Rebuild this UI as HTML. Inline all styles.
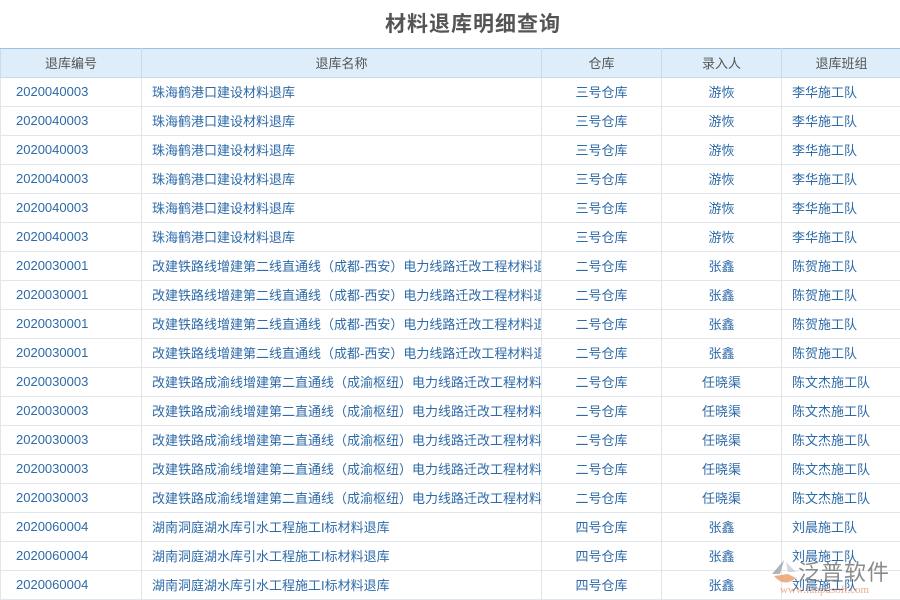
<!DOCTYPE html>
<html><head><meta charset="utf-8"><style>
body{margin:0;width:900px;height:600px;overflow:hidden;background:#fff;font-family:"Liberation Sans","Noto Sans CJK SC",sans-serif;position:relative}
h1{margin:0;position:absolute;top:8px;left:385px;font-size:21px;color:#555;font-weight:bold;letter-spacing:1px;white-space:nowrap}
table{position:absolute;top:48px;left:0;border-collapse:collapse;table-layout:fixed;width:901px}
td,th{height:28px;padding:0 0 2px 0;border:1px solid #e2e6ea;font-size:13px;white-space:nowrap;overflow:hidden;font-weight:normal;box-sizing:border-box}
tr{height:29px}
th{background:#ddeefa;color:#555;border-color:#c8dbea;border-top:1px solid #9fc3de}
td{color:#2d6aa8}
.c{text-align:center}.l{padding-left:10px;text-align:left}
td:first-child{padding-left:15px}
.wm{position:absolute;left:770px;top:552px;width:130px;height:48px}
</style></head><body>
<h1>材料退库明细查询</h1>
<table>
<colgroup><col style="width:141px"><col style="width:400px"><col style="width:120px"><col style="width:120px"><col style="width:120px"></colgroup>
<tr><th>退库编号</th><th>退库名称</th><th>仓库</th><th>录入人</th><th>退库班组</th></tr>
<tr><td>2020040003</td><td class="l">珠海鹤港口建设材料退库</td><td class="c">三号仓库</td><td class="c">游恢</td><td class="l">李华施工队</td></tr>
<tr><td>2020040003</td><td class="l">珠海鹤港口建设材料退库</td><td class="c">三号仓库</td><td class="c">游恢</td><td class="l">李华施工队</td></tr>
<tr><td>2020040003</td><td class="l">珠海鹤港口建设材料退库</td><td class="c">三号仓库</td><td class="c">游恢</td><td class="l">李华施工队</td></tr>
<tr><td>2020040003</td><td class="l">珠海鹤港口建设材料退库</td><td class="c">三号仓库</td><td class="c">游恢</td><td class="l">李华施工队</td></tr>
<tr><td>2020040003</td><td class="l">珠海鹤港口建设材料退库</td><td class="c">三号仓库</td><td class="c">游恢</td><td class="l">李华施工队</td></tr>
<tr><td>2020040003</td><td class="l">珠海鹤港口建设材料退库</td><td class="c">三号仓库</td><td class="c">游恢</td><td class="l">李华施工队</td></tr>
<tr><td>2020030001</td><td class="l">改建铁路线增建第二线直通线（成都-西安）电力线路迁改工程材料退库</td><td class="c">二号仓库</td><td class="c">张鑫</td><td class="l">陈贺施工队</td></tr>
<tr><td>2020030001</td><td class="l">改建铁路线增建第二线直通线（成都-西安）电力线路迁改工程材料退库</td><td class="c">二号仓库</td><td class="c">张鑫</td><td class="l">陈贺施工队</td></tr>
<tr><td>2020030001</td><td class="l">改建铁路线增建第二线直通线（成都-西安）电力线路迁改工程材料退库</td><td class="c">二号仓库</td><td class="c">张鑫</td><td class="l">陈贺施工队</td></tr>
<tr><td>2020030001</td><td class="l">改建铁路线增建第二线直通线（成都-西安）电力线路迁改工程材料退库</td><td class="c">二号仓库</td><td class="c">张鑫</td><td class="l">陈贺施工队</td></tr>
<tr><td>2020030003</td><td class="l">改建铁路成渝线增建第二直通线（成渝枢纽）电力线路迁改工程材料退库</td><td class="c">二号仓库</td><td class="c">任晓渠</td><td class="l">陈文杰施工队</td></tr>
<tr><td>2020030003</td><td class="l">改建铁路成渝线增建第二直通线（成渝枢纽）电力线路迁改工程材料退库</td><td class="c">二号仓库</td><td class="c">任晓渠</td><td class="l">陈文杰施工队</td></tr>
<tr><td>2020030003</td><td class="l">改建铁路成渝线增建第二直通线（成渝枢纽）电力线路迁改工程材料退库</td><td class="c">二号仓库</td><td class="c">任晓渠</td><td class="l">陈文杰施工队</td></tr>
<tr><td>2020030003</td><td class="l">改建铁路成渝线增建第二直通线（成渝枢纽）电力线路迁改工程材料退库</td><td class="c">二号仓库</td><td class="c">任晓渠</td><td class="l">陈文杰施工队</td></tr>
<tr><td>2020030003</td><td class="l">改建铁路成渝线增建第二直通线（成渝枢纽）电力线路迁改工程材料退库</td><td class="c">二号仓库</td><td class="c">任晓渠</td><td class="l">陈文杰施工队</td></tr>
<tr><td>2020060004</td><td class="l">湖南洞庭湖水库引水工程施工I标材料退库</td><td class="c">四号仓库</td><td class="c">张鑫</td><td class="l">刘晨施工队</td></tr>
<tr><td>2020060004</td><td class="l">湖南洞庭湖水库引水工程施工I标材料退库</td><td class="c">四号仓库</td><td class="c">张鑫</td><td class="l">刘晨施工队</td></tr>
<tr><td>2020060004</td><td class="l">湖南洞庭湖水库引水工程施工I标材料退库</td><td class="c">四号仓库</td><td class="c">张鑫</td><td class="l">刘晨施工队</td></tr>
</table>
<div class="wm">
<svg width="30" height="32" style="position:absolute;left:0;top:6px" viewBox="0 0 30 32"><path d="M14 2 L2 16 L10 16 Z" fill="#9aa2ad" opacity=".8"/><path d="M4 18 Q14 30 26 20 L18 16 Z" fill="#e89a6a" opacity=".8"/><path d="M16 4 L26 14 L18 14 Z" fill="#c9cdd3" opacity=".8"/></svg>
<div style="position:absolute;left:28px;top:3px;font-size:22px;color:rgba(110,110,110,.8);letter-spacing:1px;font-family:'Noto Sans CJK SC',sans-serif">泛普软件</div>
<div style="position:absolute;left:10px;top:32px;font-size:11px;color:rgba(230,140,100,.75);font-family:'Liberation Serif',serif">www.fanpusoft.com</div>
</div>
</body></html>
